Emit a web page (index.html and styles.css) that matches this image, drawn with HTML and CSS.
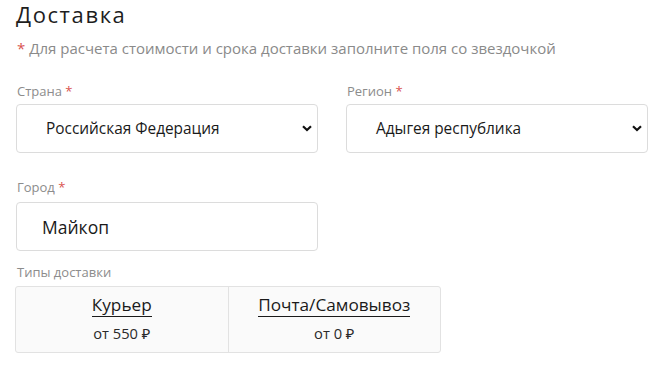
FILE: index.html
```html
<!DOCTYPE html>
<html lang="ru">
<head>
<meta charset="utf-8">
<link rel="stylesheet" href="styles.css">
</head>
<body>
<div class="page">
  <h2 class="title">Доставка</h2>
  <p class="note"><span class="req">*</span> Для расчета стоимости и срока доставки заполните поля со звездочкой</p>

  <div class="row first">
    <div class="field">
      <div class="label">Страна <span class="req">*</span></div>
      <div class="select">
        <span class="value">Российская Федерация</span>
        <svg class="chev" width="10" height="7" viewBox="0 0 10 7"><path d="M1 1.2 L5 5 L9 1.2" fill="none" stroke="#111" stroke-width="2.2"/></svg>
      </div>
    </div>
    <div class="field">
      <div class="label">Регион <span class="req">*</span></div>
      <div class="select">
        <span class="value">Адыгея республика</span>
        <svg class="chev" width="10" height="7" viewBox="0 0 10 7"><path d="M1 1.2 L5 5 L9 1.2" fill="none" stroke="#111" stroke-width="2.2"/></svg>
      </div>
    </div>
  </div>

  <div class="row second">
    <div class="field">
      <div class="label">Город <span class="req">*</span></div>
      <div class="input">Майкоп</div>
    </div>
  </div>

  <div class="label types-label">Типы доставки</div>
  <div class="types">
    <div class="type">
      <span class="type-name">Курьер</span>
      <span class="type-price">от 550 ₽</span>
    </div>
    <div class="type">
      <span class="type-name">Почта/Самовывоз</span>
      <span class="type-price">от 0 ₽</span>
    </div>
  </div>
</div>
</body>
</html>
```
FILE: styles.css
```css
* { box-sizing: border-box; }
html, body { margin: 0; padding: 0; background: #fff; }
body { font-family: "Open Sans", "Noto Sans", sans-serif; color: #222; }
.page { padding: 0 0 0 16px; }
.title {
  margin: 0;
  font-size: 22px;
  font-weight: 400;
  letter-spacing: 1.6px;
  line-height: 28px;
  color: #1e1e1e;
}
.note {
  margin: 10px 0 0 1px;
  font-size: 15px;
  line-height: 20px;
  color: #8a8a8a;
}
.req { color: #d9534f; }
.row { display: flex; gap: 28px; }
.field { width: 302px; }
.row.first { margin-top: 25px; }
.label {
  font-size: 13px;
  line-height: 16px;
  color: #8c8c8c;
  padding-left: 1px;
}
.select, .input {
  margin-top: 5px;
  height: 49px;
  border: 1px solid #dcdcdc;
  border-radius: 4px;
  display: flex;
  align-items: center;
  background: #fff;
}
.select { padding: 0 5px 0 29px; justify-content: space-between; }
.select .value { font-size: 15.4px; color: #1a1a1a; }
.chev { display: block; }
.row.second { margin-top: 26px; }
.input { margin-top: 7px; padding-left: 25px; font-size: 17.5px; color: #1a1a1a; }
.types-label { margin-top: 13px; }
.types {
  margin-top: 6px;
  margin-left: -1px;
  width: 426px;
  height: 67px;
  border: 1px solid #e2e2e2;
  border-radius: 3px;
  background: #fafafa;
  display: flex;
}
.type {
  flex: 1;
  display: flex;
  flex-direction: column;
  align-items: center;
  padding-top: 7px;
}
.type + .type { border-left: 1px solid #e2e2e2; }
.type-name {
  font-size: 17.2px;
  line-height: 22px;
  color: #1a1a1a;
  border-bottom: 1px solid #1a1a1a;
}
.type-price {
  margin-top: 6px;
  font-size: 14.7px;
  color: #2a2a2a;
}
```
